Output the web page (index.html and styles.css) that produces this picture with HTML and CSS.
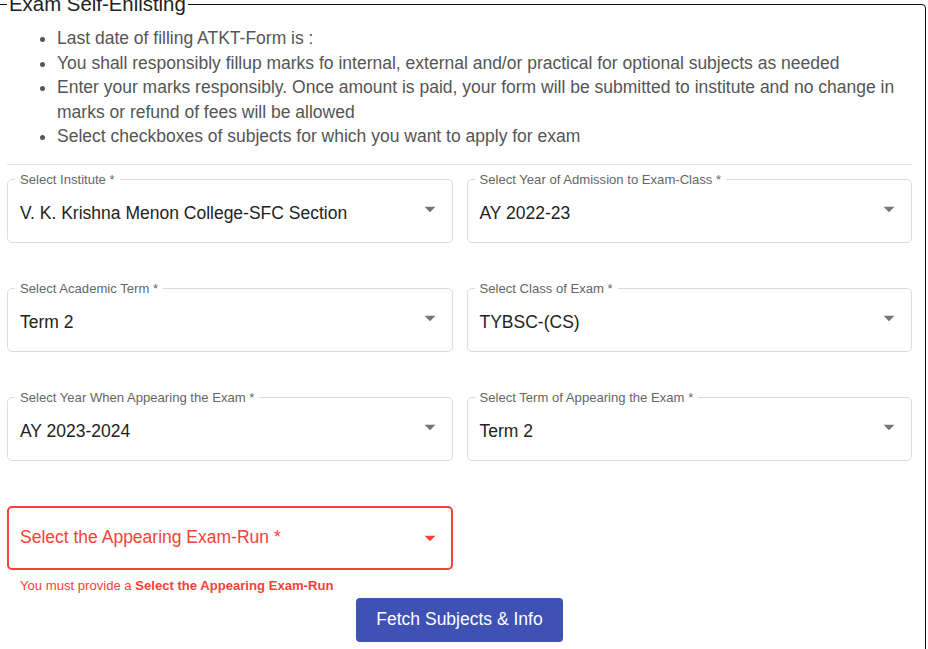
FILE: index.html
```html
<!DOCTYPE html>
<html lang="en">
<head>
<meta charset="utf-8">
<title>Exam Self-Enlisting</title>
<link rel="stylesheet" href="styles.css">
</head>
<body>
<fieldset class="panel">
  <legend class="panel-title">Exam Self-Enlisting</legend>
  <ul class="notes">
    <li>Last date of filling ATKT-Form is :</li>
    <li>You shall responsibly fillup marks fo internal, external and/or practical for optional subjects as needed</li>
    <li>Enter your marks responsibly. Once amount is paid, your form will be submitted to institute and no change in marks or refund of fees will be allowed</li>
    <li>Select checkboxes of subjects for which you want to apply for exam</li>
  </ul>
  <hr class="divider">
  <div class="grid">
    <div class="field">
      <span class="field-label">Select Institute *</span>
      <span class="field-value">V. K. Krishna Menon College-SFC Section</span>
      <svg class="caret" viewBox="0 0 24 24"><path d="M7 10l5 5 5-5z"/></svg>
    </div>
    <div class="field">
      <span class="field-label">Select Year of Admission to Exam-Class *</span>
      <span class="field-value">AY 2022-23</span>
      <svg class="caret" viewBox="0 0 24 24"><path d="M7 10l5 5 5-5z"/></svg>
    </div>
    <div class="field">
      <span class="field-label">Select Academic Term *</span>
      <span class="field-value">Term 2</span>
      <svg class="caret" viewBox="0 0 24 24"><path d="M7 10l5 5 5-5z"/></svg>
    </div>
    <div class="field">
      <span class="field-label">Select Class of Exam *</span>
      <span class="field-value">TYBSC-(CS)</span>
      <svg class="caret" viewBox="0 0 24 24"><path d="M7 10l5 5 5-5z"/></svg>
    </div>
    <div class="field">
      <span class="field-label">Select Year When Appearing the Exam *</span>
      <span class="field-value">AY 2023-2024</span>
      <svg class="caret" viewBox="0 0 24 24"><path d="M7 10l5 5 5-5z"/></svg>
    </div>
    <div class="field">
      <span class="field-label">Select Term of Appearing the Exam *</span>
      <span class="field-value">Term 2</span>
      <svg class="caret" viewBox="0 0 24 24"><path d="M7 10l5 5 5-5z"/></svg>
    </div>
    <div class="error-cell">
      <div class="field field-error">
        <span class="field-value">Select the Appearing Exam-Run *</span>
        <svg class="caret" viewBox="0 0 24 24"><path d="M7 10l5 5 5-5z"/></svg>
      </div>
      <p class="helper">You must provide a <b>Select the Appearing Exam-Run</b></p>
    </div>
  </div>
  <div class="actions">
    <button class="btn" type="button">Fetch Subjects &amp; Info</button>
  </div>
</fieldset>
</body>
</html>
```

FILE: styles.css
```css
html, body {
  margin: 0;
  padding: 0;
  background: #fff;
  overflow: hidden;
}

body {
  font-family: "Liberation Sans", Arial, sans-serif;
}

.panel {
  margin: -7px 2px 0 -4px;
  padding: 0 13px 20px 10px;
  border: 1px solid #111;
  border-radius: 4px;
  min-width: 0;
}

.panel-title {
  padding: 0 2px;
  margin-left: 0;
  font-size: 20.4px;
  color: #222;
}

.notes {
  margin: 10px 0 0;
  padding-left: 50px;
  font-size: 17.5px;
  line-height: 24.5px;
  color: #555;
}

.divider {
  margin: 15px 0 14px;
  border: 0;
  border-top: 1px solid #e3e3e3;
  height: 0;
}

.grid {
  display: grid;
  grid-template-columns: 1fr 1fr;
  column-gap: 14px;
  row-gap: 45px;
}

.field {
  position: relative;
  display: flex;
  align-items: center;
  height: 64px;
  box-sizing: border-box;
  padding: 6px 9px 0 12px;
  border: 1px solid #dcdcdc;
  border-radius: 5px;
}

.field-label {
  position: absolute;
  top: -8px;
  left: 7px;
  padding: 0 5px;
  background: #fff;
  font-size: 13.1px;
  line-height: 15px;
  color: #666;
}

.field-value {
  flex: 1;
  font-size: 17.5px;
  color: #222;
  white-space: nowrap;
}

.caret {
  width: 26px;
  height: 26px;
  margin-top: -9px;
  fill: #757575;
}

.field-error {
  border: 2px solid #f44336;
  padding: 0 8px 0 11px;
}

.field-error .field-value {
  color: #f44336;
}

.field-error .caret {
  fill: #f44336;
  margin-top: 0;
}

.helper {
  margin: 8px 0 0 13px;
  font-size: 13.1px;
  line-height: 15px;
  color: #f44336;
}

.helper b {
  font-weight: bold;
}

.actions {
  display: flex;
  justify-content: center;
  margin-top: 5px;
}

.btn {
  height: 44px;
  padding: 0 20px;
  border: 0;
  border-radius: 4px;
  background: #3f51b5;
  color: #fff;
  font-family: "Liberation Sans", Arial, sans-serif;
  font-size: 17.5px;
  cursor: pointer;
}
```
